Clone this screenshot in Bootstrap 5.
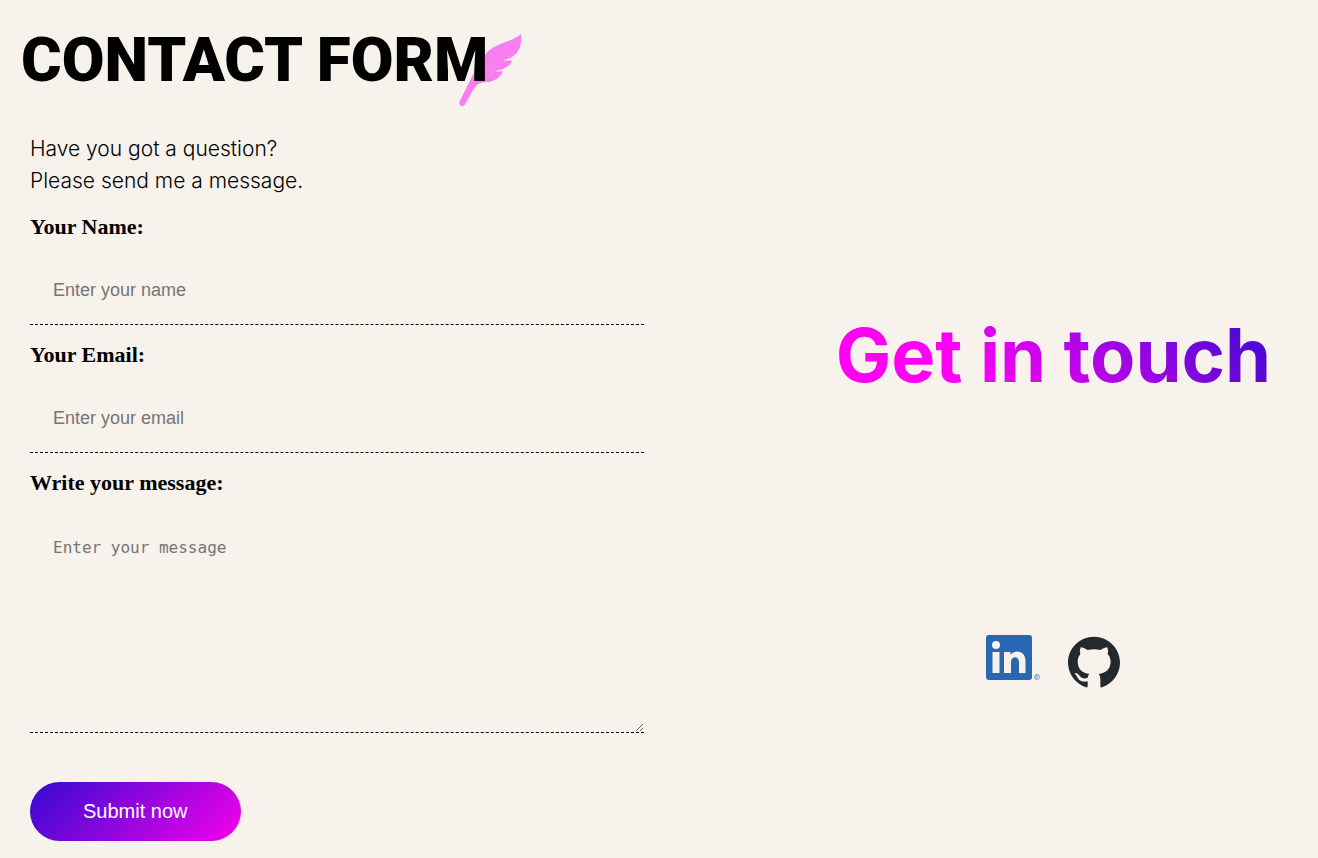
<!DOCTYPE html>
<html lang="en">
<head>
<meta charset="utf-8">
<meta name="viewport" content="width=device-width, initial-scale=1">
<title>Contact form</title>
<link href="https://cdn.jsdelivr.net/npm/bootstrap@5.3.0/dist/css/bootstrap.min.css" rel="stylesheet">
<style>
  body { background: #f7f2ec; color: #000; font-family: Inter, "Liberation Sans", sans-serif; }
  .contact-main { padding: 24px 15px 16px 30px; }
  .page-title { font-family: Roboto, sans-serif; font-size: 62px; line-height: 72px; font-weight: 900; margin: 0 0 37px -9px; text-transform: uppercase; }
  .title-word { position: relative; z-index: 1; white-space: nowrap; }
  .feather { position: absolute; right: -36px; top: 10px; width: 66px; height: 74px; z-index: -1; }
  .intro { font-size: 21px; line-height: 32px; font-weight: 300; margin-bottom: 14px; }
  .field-label { font: bold 22px/32px "Liberation Serif", serif; margin-bottom: 12px; display: block; }
  .field-box { border: 0; border-bottom: 1px dashed #000; border-radius: 0; background: transparent; padding: 23px 23px 22px; font-family: "Liberation Sans", sans-serif; font-size: 18px; line-height: 27px; height: 70px; margin-bottom: 14px; }
  .field-box:focus { background: transparent; box-shadow: none; border-color: #c0e; }
  .field-box::placeholder { color: #757575; }
  .message-box { font-family: "DejaVu Sans Mono", monospace; font-size: 16px; height: 222px; margin-bottom: 49px; resize: vertical; }
  .send-btn { background: linear-gradient(135deg, #340ad0, #f500eb); color: #fff; font: 20px/27px "Liberation Sans", sans-serif; padding: 16px 53px; border: 0; border-radius: 30px; }
  .aside-col { padding: 312px 15px 0 35px; }
  .touch-title { font-size: 74px; line-height: 86px; font-weight: 700; margin-bottom: 236px; white-space: nowrap; color: transparent; background: linear-gradient(45deg, #ff00f5 30%, #340ad0); -webkit-background-clip: text; background-clip: text; }
</style>
</head>
<body>
<div class="container-fluid p-0">
  <div class="row g-0">
    <main class="col-md-6 contact-main">
      <h1 class="page-title"><span class="title-word">Contact form<svg class="feather" viewBox="54 24 198 222" aria-hidden="true"><path fill="#f97ff0" d="M243 27C215 52 166 53 137 86C119 105 109 132 98 151L58 231C55 244 71 248 76 237C90 214 104 176 124 173C132 170 145 173 155 169C172 163 184 153 189 139C181 137 173 141 162 138C190 136 211 124 216 107C208 105 201 108 190 105C230 99 247 70 243 27Z"/></svg></span></h1>
      <p class="intro">Have you got a question?<br>Please send me a message.</p>
      <form>
        <label class="field-label" for="name">Your Name:</label>
        <input class="form-control field-box" id="name" type="text" placeholder="Enter your name">
        <label class="field-label" for="email">Your Email:</label>
        <input class="form-control field-box" id="email" type="email" placeholder="Enter your email">
        <label class="field-label" for="message">Write your message:</label>
        <textarea class="form-control field-box message-box" id="message" placeholder="Enter your message"></textarea>
        <button class="btn send-btn" type="submit">Submit now</button>
      </form>
    </main>
    <aside class="col-md-5 offset-md-1 aside-col d-flex flex-column align-items-center">
      <h2 class="touch-title">Get in touch</h2>
      <div class="d-flex align-items-start gap-4">
        <a href="#" aria-label="LinkedIn"><svg class="d-block" width="58" height="54" viewBox="0 0 58 54"><rect x="1" y="1" width="46" height="45" rx="3" fill="#2867b2"/><g fill="#f7f2ec"><circle cx="11" cy="11" r="4"/><path d="M7.500 18h7v21h-7zM19 18h6.500v3c3.500-5.500 15-5 15 6v12H34V28c0-6.500-8-6-8 0v11h-7z"/></g><g fill="none" stroke="#6e94c6" stroke-width=".8"><circle cx="52" cy="43" r="2.600"/><path d="M51 44.500v-3h1.200q1 .8 0 1.600H51m1.200 0 1 1.400"/></g></svg></a>
        <a href="#" aria-label="GitHub"><svg class="d-block" width="54" height="56" viewBox="36 27 162 168"><path fill="#24292f" d="M117 35C73 35 39 70 39 113C39 147 62 176 93 187Q98 188 98 183V169C82 172 73 169 67 157Q64 151 60 147Q59 143 64 144Q70 146 75 154C81 162 91 161 98 158Q99 151 103 147C83 144 68 135 68 108Q68 96 76 87Q73 77 77 67Q84 66 98 75Q117 70 136 75Q150 66 157 67Q161 77 158 87Q167 96 167 108C167 135 151 144 131 147Q136 152 136 161V183Q136 188 141 187C172 176 195 147 195 113C195 70 160 35 117 35Z"/></svg></a>
      </div>
    </aside>
  </div>
</div>
<script src="https://cdn.jsdelivr.net/npm/bootstrap@5.3.0/dist/js/bootstrap.bundle.min.js"></script>
</body>
</html>
